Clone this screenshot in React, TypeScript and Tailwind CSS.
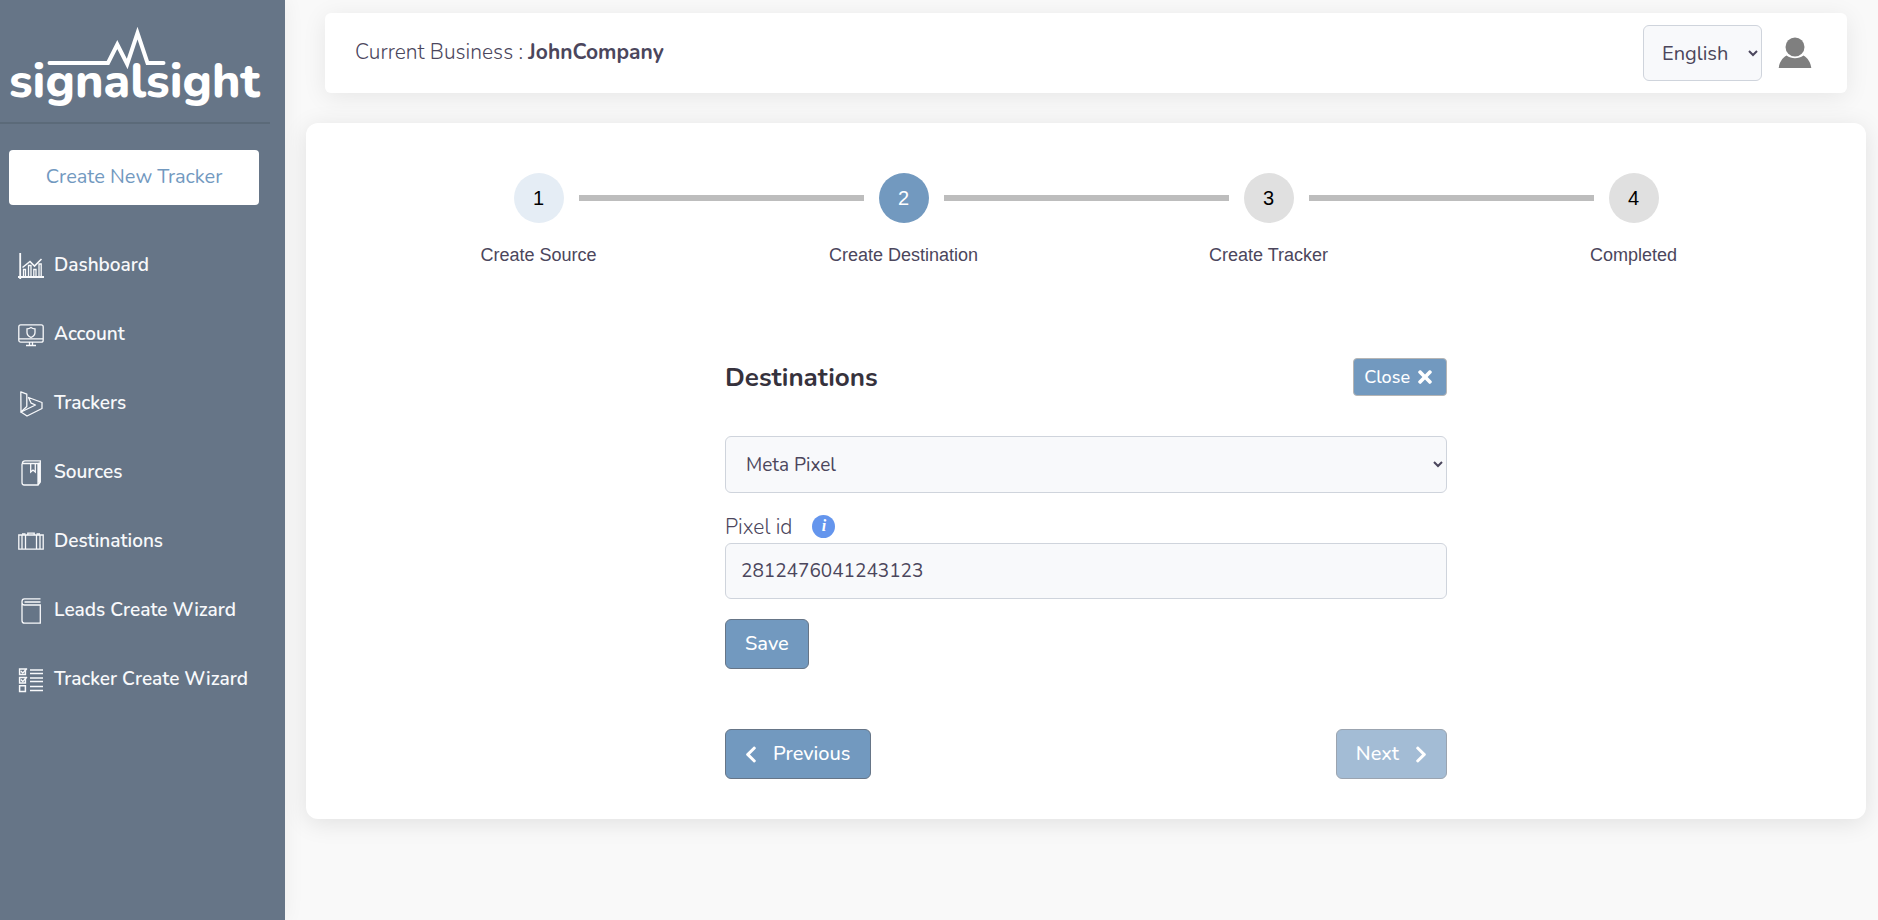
import React, { useState } from 'react';
import { FaChevronLeft, FaChevronRight, FaTimes } from 'react-icons/fa';

type IconProps = { className?: string };

const iconBase = {
  viewBox: '0 0 26 26',
  fill: 'none',
  stroke: 'currentColor',
  strokeWidth: 1.3,
  'aria-hidden': true,
} as const;

const DashboardIcon = ({ className }: IconProps) => (
  <svg {...iconBase} className={className}>
    <path d="M2.2 0v26M0 24h26" strokeWidth="1.8" />
    <path d="M4.5 14.5l7.5-6 4.5 4.5L23.5 6" strokeWidth="1.6" />
    <path d="M5.5 23v-6.5h2v6.5M10.5 23V12.5H13V23M15.8 23v-6.5H18V23M21 23V11h2.2v12" />
  </svg>
);

const AccountIcon = ({ className }: IconProps) => (
  <svg {...iconBase} className={className}>
    <rect x="0.8" y="2.8" width="24.4" height="17.4" rx="2" />
    <path d="M1 16.8h24M11.5 20v3M14.5 20v3M8 23.5h10" />
    <path d="M13 5.5c1.4 1 2.7 1.3 4 1.4v3.6c0 2.4-1.6 4-4 5-2.4-1-4-2.6-4-5V6.9c1.3-.1 2.6-.4 4-1.4z" />
  </svg>
);

const TrackersIcon = ({ className }: IconProps) => (
  <svg {...iconBase} className={className} strokeLinejoin="round">
    <path d="M2.8.8l6 2.3v12.5L3 21z" />
    <path d="M10.5 6.5L24 11.5v6L9 25l-6-4L17.5 14l-4.3-1.8z" />
  </svg>
);

const SourcesIcon = ({ className }: IconProps) => (
  <svg {...iconBase} className={className}>
    <path d="M4 4v18.5c0 1.5.8 2.5 2.2 2.5H20V3.5H4.3C4.5 1.7 5.4.8 7 .8h15.3V22L20 25M21 2.5v20" />
    <path d="M12.7 3.5V12l2.3-2 2.3 2V3.5" />
  </svg>
);

const DestinationsIcon = ({ className }: IconProps) => (
  <svg {...iconBase} className={className}>
    <path d="M.8 6h24.4v14.2H.8zM4 6v14M7.5 6v14M18.5 6v14M22 6v14" />
    <path d="M9.8 6V4.2h6.4V6M4 5h3.5M18.5 5H22" />
  </svg>
);

const LeadsIcon = ({ className }: IconProps) => (
  <svg {...iconBase} className={className}>
    <path d="M22.5.8h-16C4.8.8 4 2 4 3.5v19c0 1.7.9 2.7 2.5 2.7h15.8V7H6.5C5 7 4 5.8 4 4.5M6.5 4h16" />
  </svg>
);

const TrackerWizardIcon = ({ className }: IconProps) => (
  <svg {...iconBase} className={className}>
    <path d="M1.6 2h5.8v5.6H1.6zM1.6 10.5h5.8v5.6H1.6zM1.6 18.8h5.8v5.6H1.6z" strokeWidth="1.5" />
    <path d="M2.8 4l2 2L9 1.5M2.8 12.5l2 2L9 10" />
    <path d="M12 3h13M12 6.5h13M12 11h13M12 14.5h13M12 19.5h13M12 23.5h13" />
  </svg>
);

const Logo = () => (
  <svg viewBox="0 0 260 94" className="w-65 text-white" role="img" aria-label="signalsight">
    <text
      x="0"
      y="71"
      fontSize="48"
      fontWeight="800"
      fill="currentColor"
      fontFamily="Nunito, 'Open Sans', sans-serif"
    >
      signalsight
    </text>
    <path
      d="M40.5 37H99l9.3-18.5 9.9 19.5L128.500 7l10 30h16"
      fill="none"
      stroke="currentColor"
      strokeWidth="4"
      strokeLinecap="round"
    />
  </svg>
);

const UserIcon = ({ className }: IconProps) => (
  <svg viewBox="0 0 34 32" fill="currentColor" className={className} aria-hidden="true">
    <circle cx="17" cy="10" r="9.5" />
    <path d="M8.5 18.5c2.5 1.8 5.5 2.8 8.5 2.8s6-1 8.500-2.800c4.300 2.500 7.200 7 7.800 12.500H.7c.6-5.500 3.500-10 7.800-12.500z" />
  </svg>
);

const menuItems = [
  { label: 'Dashboard', Icon: DashboardIcon },
  { label: 'Account', Icon: AccountIcon },
  { label: 'Trackers', Icon: TrackersIcon },
  { label: 'Sources', Icon: SourcesIcon },
  { label: 'Destinations', Icon: DestinationsIcon },
  { label: 'Leads Create Wizard', Icon: LeadsIcon },
  { label: 'Tracker Create Wizard', Icon: TrackerWizardIcon },
];

const steps = [
  { label: 'Create Source', color: 'bg-[#e5edf5] text-black' },
  { label: 'Create Destination', color: 'bg-[#7299bf] text-white' },
  { label: 'Create Tracker', color: 'bg-[#e0e0e0] text-black' },
  { label: 'Completed', color: 'bg-[#e0e0e0] text-black' },
];

// Left navigation
const Sidebar = () => (
  <aside className="w-[285px] shrink-0 bg-[#667587] pt-[26px] shadow-[0_0_20px_rgba(0,0,0,0.06)]">
    <a href="#" className="block pl-[9px]">
      <Logo />
    </a>
    <hr className="mt-0.5 mr-[15px] border-t-2 border-[#5b6a79]" />
    <button className="mt-[26px] ml-[9px] h-[55px] w-[250px] rounded-sm bg-white pb-0.5 text-xl text-[#7299bf]">
      Create New Tracker
    </button>
    <nav className="mt-[26px]">
      <ul>
        {menuItems.map(({ label, Icon }) => (
          <li key={label}>
            <a href="#" className="flex h-[69px] items-center gap-2.5 pl-[18px] text-[19px] font-semibold text-[#f8f9fb]">
              <Icon className="size-[26px]" />
              {label}
            </a>
          </li>
        ))}
      </ul>
    </nav>
  </aside>
);

// Top bar with business name and language
const Header = () => {
  const [language, setLanguage] = useState('English');

  return (
    <header className="mx-[19px] flex h-20 items-center justify-between rounded-md bg-white pr-[35px] pl-[30px] shadow-[0_4px_24px_rgba(0,0,0,0.08)]">
      <p className="text-[21px] font-light">
        Current Business : <b className="font-bold">JohnCompany</b>
      </p>
      <div className="flex items-center gap-4">
        <select
          aria-label="Language"
          value={language}
          onChange={(e) => setLanguage(e.target.value)}
          className="h-14 w-[119px] rounded-md border border-[#cfd4dc] bg-[#f8f9fb] pl-3.5 text-xl"
        >
          <option>English</option>
          <option>Türkçe</option>
        </select>
        <button aria-label="Profile">
          <UserIcon className="h-8 w-[34px] text-[#7f7f7f]" />
        </button>
      </div>
    </header>
  );
};

// Wizard progress
const Stepper = () => (
  <ol className="flex font-['Liberation_Sans',sans-serif]">
    {steps.map((step, i) => (
      <li key={step.label} className="relative flex flex-1 flex-col items-center">
        {i > 0 && (
          <span className="absolute top-[22px] right-[calc(50%+40px)] left-[calc(-50%+40px)] h-1.5 bg-[#bdbdbd]" />
        )}
        <span className={`flex size-[50px] items-center justify-center rounded-full text-xl ${step.color}`}>
          {i + 1}
        </span>
        <span className="mt-5 text-lg leading-6">{step.label}</span>
      </li>
    ))}
  </ol>
);

const DestinationForm = () => {
  const [type, setType] = useState('Meta Pixel');
  const [pixelId, setPixelId] = useState('2812476041243123');

  return (
    <section className="mx-auto mt-[91px] w-[722px] max-w-full">
      <div className="flex h-[38px] items-center justify-between">
        <h1 className="text-[26px] font-bold text-[#36323d]">Destinations</h1>
        <button className="flex h-[38px] items-center gap-2 rounded-sm border border-[#b5b5b5] bg-[#7299bf] pr-3.5 pl-2.5 text-lg font-medium text-white">
          Close <FaTimes className="h-5 w-3.5" />
        </button>
      </div>
      <select
        aria-label="Destination type"
        value={type}
        onChange={(e) => setType(e.target.value)}
        className="mt-10 h-[57px] w-full rounded-md border border-[#cfd4dc] bg-[#f8f9fb] pl-4 text-[19px]"
      >
        <option>Meta Pixel</option>
      </select>
      <div className="mt-5 flex h-[30px] items-center gap-5">
        <label htmlFor="pixel-id" className="text-[21px] font-light">
          Pixel id
        </label>
        <span className="mb-1 flex size-[23px] items-center justify-center rounded-full bg-[#6495ed] font-['Liberation_Serif',serif] text-base font-bold text-white italic">
          i
        </span>
      </div>
      <input
        id="pixel-id"
        type="text"
        value={pixelId}
        onChange={(e) => setPixelId(e.target.value)}
        className="h-14 w-full rounded-md border border-[#cfd4dc] bg-[#f8f9fb] px-[15px] text-[19px]"
      />
      <button className="mt-5 h-[50px] rounded-md border border-[#667587] bg-[#7299bf] px-[19px] text-xl font-medium text-white">
        Save
      </button>
      <div className="mt-15 flex justify-between">
        <button className="flex h-[50px] items-center gap-4 rounded-md border border-[#667587] bg-[#7299bf] px-[19px] text-xl font-medium text-white">
          <FaChevronLeft className="h-[19px] w-3" /> Previous
        </button>
        <button
          disabled
          className="flex h-[50px] items-center gap-4 rounded-md border border-[#667587] bg-[#7299bf] px-[19px] text-xl font-medium text-white opacity-65"
        >
          Next <FaChevronRight className="h-[19px] w-3" />
        </button>
      </div>
    </section>
  );
};

export default function App() {
  return (
    <div className="flex min-h-screen bg-[#f9f9f9] font-['Nunito','Open_Sans',sans-serif] text-[#4b465c]">
      <Sidebar />
      <main className="min-w-0 flex-1 pt-[13px] pr-3 pl-[21px]">
        <Header />
        <div className="mt-[30px] rounded-xl bg-white px-[50px] pt-[50px] pb-10 shadow-[0_4px_24px_rgba(0,0,0,0.1)]">
          <Stepper />
          <DestinationForm />
        </div>
      </main>
    </div>
  );
}
